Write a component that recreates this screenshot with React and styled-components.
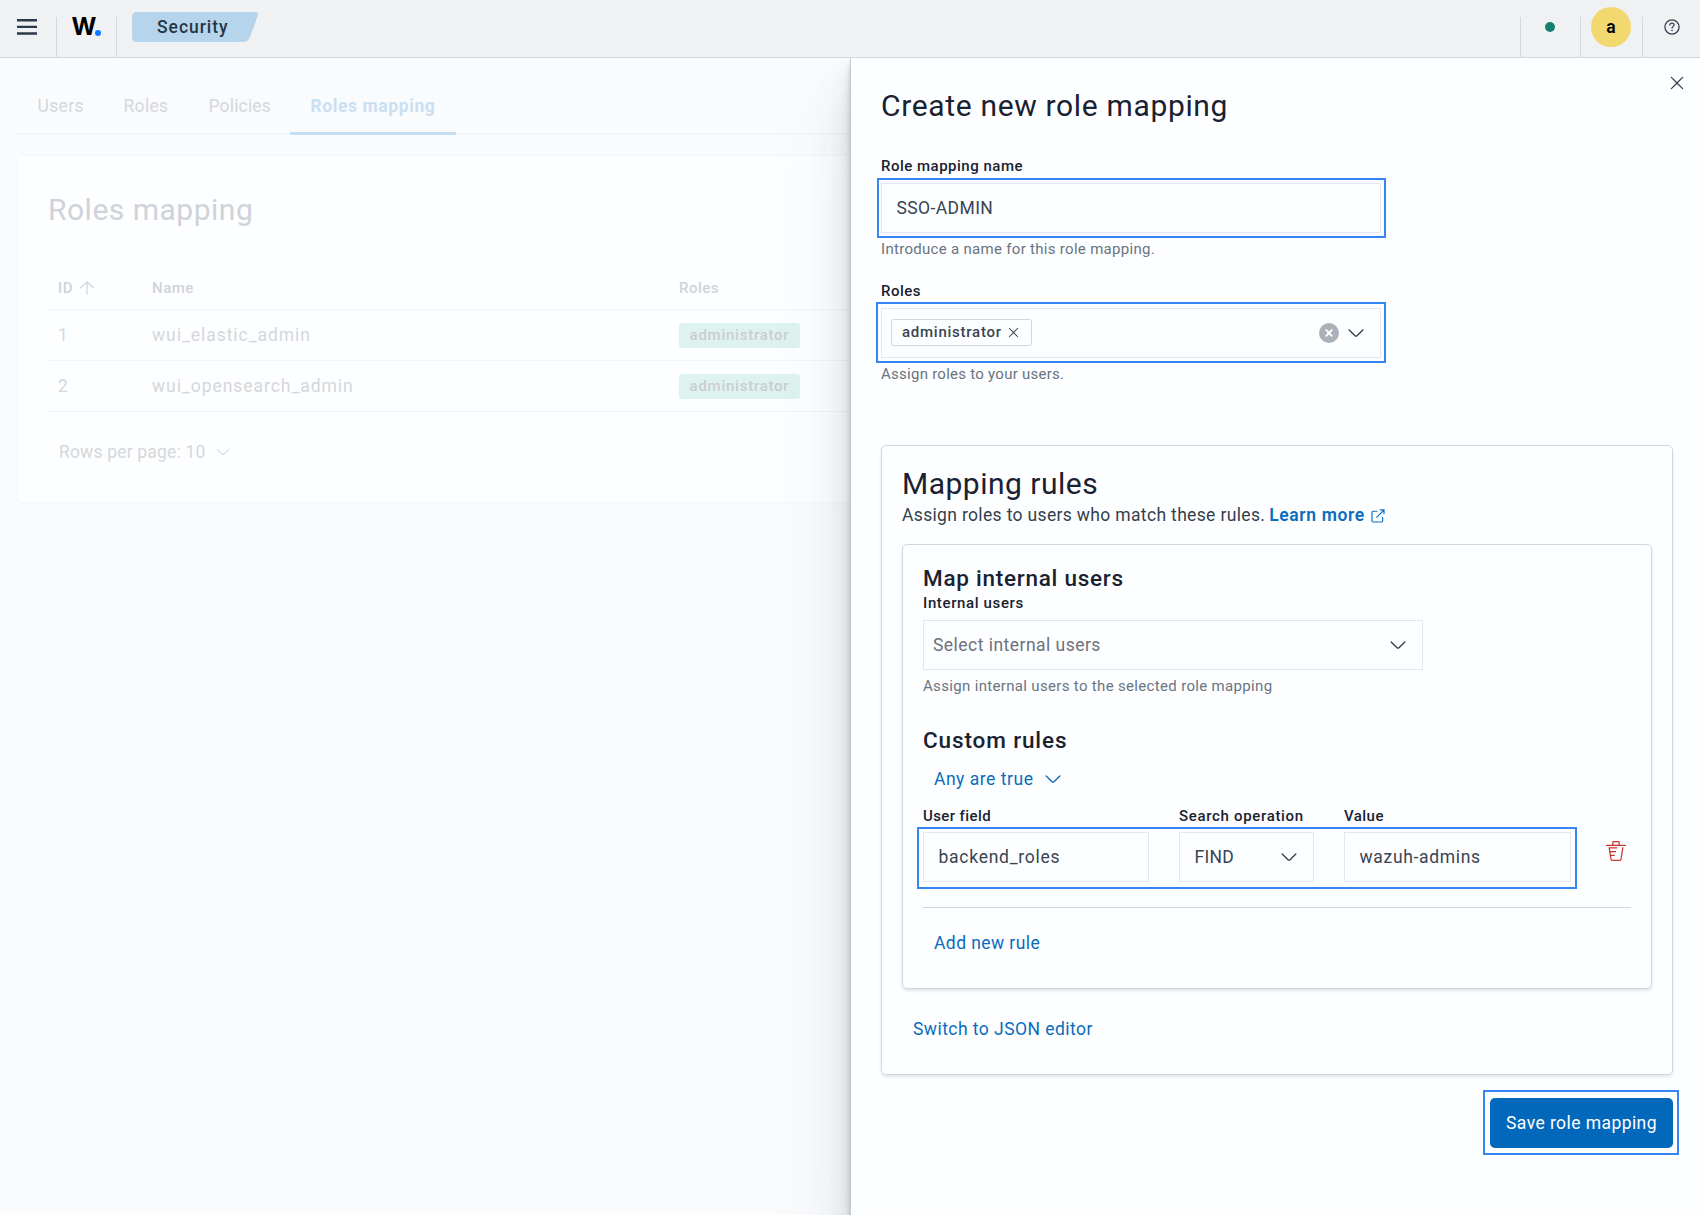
import React from "react";
import styled, { createGlobalStyle } from "styled-components";

const GlobalStyle = createGlobalStyle`
  * { box-sizing: border-box; }
  body {
    margin: 0;
    background: #fafbfd;
    font-family: Roboto, "Liberation Sans", sans-serif;
    font-size: 17.5px;
    color: #343f4d;
  }
  h1, h2, h3, p { margin: 0; font-weight: 400; }
  button { font: inherit; color: inherit; border: 0; background: none; padding: 0; }
`;

const Page = styled.div`
  width: 1700px;
  height: 1215px;
  display: flex;
  flex-direction: column;
  overflow: hidden;
`;

/* ---------- text ---------- */
const Text = styled.span`
  letter-spacing: ${(p) => p.$track || 0}px;
  white-space: pre;
`;

/* ---------- header ---------- */
const Header = styled.header`
  position: relative;
  z-index: 2;
  flex: none;
  display: flex;
  justify-content: space-between;
  height: 58px;
  background: #f0f1f3;
  border-bottom: 1px solid #d4d7dc;
`;
const HeaderSide = styled.div`
  display: flex;
  align-items: flex-end;
`;
const HeaderCell = styled.div`
  width: ${(p) => p.$w}px;
  height: 40px;
  padding-bottom: 20px;
  padding-right: ${(p) => p.$pr || 0}px;
  display: flex;
  align-items: center;
  justify-content: center;
  border-left: ${(p) => (p.$line ? "1px solid #d4d7dc" : "0")};
`;
const MenuCell = styled(HeaderCell)`
  justify-content: flex-start;
  padding-left: 17px;
`;
const Logo = styled.div`
  display: flex;
  align-items: center;
  font-family: Inter, sans-serif;
  font-size: 24px;
  font-weight: 650;
  line-height: 20px;
  color: #000;
`;
const LogoMark = styled.span`
  display: inline-block;
  margin-right: -1px;
`;
const LogoDot = styled.i`
  width: 6px;
  height: 6px;
  margin-top: 12px;
  border-radius: 50%;
  background: #0a7dff;
`;
const Crumb = styled.div`
  position: relative;
  align-self: flex-start;
  display: flex;
  width: 126px;
  height: 30px;
  margin: 12px 0 0 15px;
  padding-left: 25px;
  align-items: center;
  font-weight: 500;
  color: #263645;
  svg { position: absolute; left: 0; top: 0; }
  span { position: relative; }
`;
const StatusDot = styled.i`
  width: 10px;
  height: 10px;
  border-radius: 50%;
  background: #147f6d;
`;
const Avatar = styled.div`
  flex: none;
  width: 40px;
  height: 40px;
  border-radius: 50%;
  background: #f1d86f;
  font-weight: 600;
  color: #000;
  line-height: 40px;
  text-align: center;
`;

/* ---------- main area ---------- */
const Main = styled.main`
  flex: 1;
  display: grid;
  grid-template-columns: 850px 850px;
`;
const Backdrop = styled.section`
  padding: 20px 0 0 17px;
  color: #d4d7db;
`;
const Tabs = styled.nav`
  display: flex;
  height: 57px;
  box-shadow: inset 0 -2px 0 #f5f6f8;
`;
const Tab = styled.div`
  width: ${(p) => p.$w}px;
  padding-left: ${(p) => p.$pad || 20.5}px;
  line-height: 57px;
  color: ${(p) => (p.$active ? "#c9e0f3" : "inherit")};
  font-weight: ${(p) => (p.$active ? 700 : 400)};
  box-shadow: ${(p) => (p.$active ? "inset 0 -3px 0 #c5def1" : "none")};
`;
const TablePanel = styled.div`
  height: 348px;
  margin-top: 20px;
  padding: 36px 0 0 30px;
  background: #fdfeff;
  border: 1px solid #f5f6f8;
  border-right: 0;
  border-radius: 5px 0 0 5px;
  box-shadow: 0 2px 2px rgba(60, 70, 100, 0.012);
`;
const PanelTitle = styled.h1`
  font-size: 30px;
  line-height: 36px;
  color: #cfd2d8;
`;
const Table = styled.div`
  margin-top: 39px;
`;
const TableRow = styled.div`
  display: grid;
  grid-template-columns: 94px 527px 1fr;
  align-items: center;
  height: ${(p) => (p.$head ? 43 : 51)}px;
  padding-left: 10px;
  border-bottom: 1px solid #f4f5f8;
  font-size: ${(p) => (p.$head ? "15px" : "17.5px")};
  font-weight: ${(p) => (p.$head ? 500 : 400)};
  color: ${(p) => (p.$head ? "#cfd2d8" : "#d4d7db")};
`;
const Sorted = styled.div`
  display: flex;
  align-items: center;
  gap: 7px;
`;
const Badge = styled.span`
  width: 121px;
  height: 25px;
  line-height: 25px;
  text-align: center;
  background: #dff3ee;
  border-radius: 3px;
  font-size: 15px;
  font-weight: 500;
  color: #c9ced0;
`;
const Pager = styled.div`
  display: flex;
  align-items: center;
  gap: 10px;
  height: 24px;
  margin: 28px 0 0 11px;
`;

/* ---------- flyout ---------- */
const Flyout = styled.aside`
  position: relative;
  z-index: 1;
  display: flex;
  flex-direction: column;
  padding: 30px 27px 0 30px;
  background: #fdfeff;
  border-left: 1px solid #c6cad2;
  box-shadow:
    0 50px 80px rgba(65, 78, 101, 0.1),
    0 30px 40px rgba(65, 78, 101, 0.1),
    0 20px 20px rgba(65, 78, 101, 0.1),
    0 10px 10px rgba(65, 78, 101, 0.1),
    0 5px 5px rgba(65, 78, 101, 0.1),
    0 2.5px 2.5px rgba(65, 78, 101, 0.1);
`;
const CloseButton = styled.button`
  position: absolute;
  top: 15px;
  right: 13px;
  width: 20px;
  height: 20px;
`;
const Title = styled.h2`
  font-size: 30px;
  line-height: 36px;
  color: #1a2130;
`;
const SectionTitle = styled.h3`
  margin-top: ${(p) => p.$mt || 0}px;
  font-size: 22.5px;
  font-weight: 500;
  line-height: 27px;
  color: #1a2130;
`;
const Label = styled.div`
  margin: ${(p) => p.$mt || 0}px 0 ${(p) => p.$mb || 7}px;
  font-size: 15px;
  font-weight: 500;
  line-height: 20px;
  color: #1a2130;
`;
const Help = styled.p`
  margin-top: 6px;
  font-size: 15px;
  line-height: 20px;
  color: #69747f;
`;
const Field = styled.div`
  position: relative;
  display: flex;
  align-items: center;
  width: ${(p) => p.$w}px;
  height: 50px;
  padding: 0 ${(p) => p.$right || 15}px 0 ${(p) => p.$left || 14.5}px;
  background: #fdfeff;
  border: 1px solid #e3e7f2;
  color: ${(p) => (p.$placeholder ? "#6d717b" : "#374452")};
`;
const Spacer = styled.span`
  flex: 1;
`;
const Highlight = styled.div`
  position: absolute;
  top: ${(p) => p.$t}px;
  right: ${(p) => p.$r}px;
  bottom: ${(p) => p.$b}px;
  left: ${(p) => p.$l}px;
  border: 2px solid #3585f5;
  pointer-events: none;
`;
const Pill = styled.span`
  display: flex;
  align-items: center;
  gap: 4px;
  width: 141px;
  height: 27px;
  margin-top: -2px;
  padding-left: 10px;
  border: 1px solid #d3d6dc;
  border-radius: 2.5px;
  font-size: 15px;
  font-weight: 500;
`;
const ClearButton = styled.button`
  display: flex;
  align-items: center;
  justify-content: center;
  width: 20px;
  height: 20px;
  margin-right: 7px;
  border-radius: 50%;
  background: #abb1b8;
`;
const Panel = styled.div`
  display: flex;
  flex-direction: column;
  align-items: flex-start;
  margin-top: ${(p) => p.$mt}px;
  padding: 20px 20px 33px;
  border: 1px solid #d3d6dc;
  border-radius: 5px;
  box-shadow: 0 2px 3px rgba(65, 78, 101, 0.14);
`;
const InnerPanel = styled(Panel)`
  width: 750px;
`;
const Intro = styled.p`
  display: flex;
  align-items: center;
  margin-top: 1px;
  line-height: 24px;
`;
const Link = styled.a`
  display: flex;
  align-items: center;
  gap: 6px;
  margin-left: 4px;
  font-weight: 600;
  color: #0a6cbd;
  svg { margin-top: 2px; }
`;
const TextButton = styled.button`
  display: flex;
  align-items: center;
  gap: 10px;
  height: 25px;
  margin: ${(p) => p.$mt}px 0 0 11px;
  color: #0a6cbd;
`;
const RuleRow = styled.div`
  position: relative;
  display: grid;
  grid-template-columns: 226px 135px 227px 20px;
  column-gap: 30px;
  width: 708px;
  margin-top: 15px;
  padding-bottom: 25px;
  border-bottom: 1px solid #d3d6dc;
`;
const DeleteButton = styled.button`
  display: flex;
  width: 20px;
  height: 20px;
  margin: 35px 0 0 5px;
`;
const SaveButton = styled.button`
  position: relative;
  align-self: flex-end;
  width: 183px;
  height: 50px;
  margin-top: 23px;
  border-radius: 5px;
  background: #0268bc;
  color: #fff;
`;

/* ---------- icons ---------- */
const Svg = styled.svg`
  display: block;
  flex: none;
`;
const Icon = ({ d, size = 20, color = "#343f4d" }) => (
  <Svg width={size} height={size} viewBox="0 0 16 16" fill={color}>
    <path d={d} />
  </Svg>
);
const CHEVRON =
  "M13.069 5.157 8.384 9.768a.546.546 0 0 1-.768 0L2.93 5.158a.552.552 0 0 0-.771 0 .53.53 0 0 0 0 .759l4.684 4.61a1.65 1.65 0 0 0 2.312 0l4.684-4.61a.53.53 0 0 0 0-.76.552.552 0 0 0-.771 0Z";
const CROSS =
  "M7.293 8 3.146 3.854a.5.5 0 1 1 .708-.708L8 7.293l4.146-4.147a.5.5 0 0 1 .708.708L8.707 8l4.147 4.146a.5.5 0 0 1-.708.708L8 8.707l-4.146 4.147a.5.5 0 0 1-.708-.708L7.293 8Z";
const TRASH =
  "M11 3h5v1H0V3h5V1a1 1 0 0 1 1-1h4a1 1 0 0 1 1 1v2Zm-7.056 8H7v1H4.1l.392 2.519c.042.269.254.458.493.458h6.03c.239 0 .451-.189.493-.458l1.498-9.576H14l-1.504 9.73c-.116.747-.74 1.304-1.481 1.304h-6.03c-.741 0-1.365-.557-1.481-1.304l-1.511-9.73H9V5.95H3.157L3.476 8H8v1H3.632l.312 2ZM6 3h4V1H6v2Z";

const MenuIcon = () => (
  <Svg width="20" height="16" viewBox="0 0 20 16" fill="#2b3a4a">
    <path d="M0 0h20v2.4H0zM0 6.7h20v2.4H0zM0 13.3h20v2.4H0z" />
  </Svg>
);
const CrumbShape = () => (
  <svg width="126" height="30" viewBox="0 0 126 30" fill="#b6d4ec">
    <path d="M5 0H123Q127 0 125.6 4L118.2 24.5Q116.2 30 111 30H5Q0 30 0 25V5Q0 0 5 0Z" />
  </svg>
);
const SortUp = () => (
  <Svg width="14" height="14" viewBox="0 0 14 14" fill="none" stroke="#cfd2d8" strokeWidth="1.2" strokeLinecap="round">
    <path d="M7 13.2V1M0.8 6.8 7 0.9l6.2 5.9" />
  </Svg>
);
const HelpIcon = () => (
  <Svg width="16" height="16" viewBox="0 0 16 16" fill="none" stroke="#343f4d" strokeWidth="1.25" strokeLinecap="round">
    <circle cx="8" cy="8" r="7.1" />
    <path d="M5.9 6.1C5.9 4.7 6.8 4 8 4s2.1.8 2.1 1.9C10.1 7.3 8 7.5 8 9.2" />
    <circle cx="8" cy="11.5" r=".4" fill="#343f4d" strokeWidth=".8" />
  </Svg>
);
const PopOut = () => (
  <Svg width="14" height="14" viewBox="0 0 14 14" fill="none" stroke="#0a6cbd" strokeWidth="1.15" strokeLinecap="round">
    <path d="M6 2.2H2.2Q1 2.2 1 3.4V11.8Q1 13 2.2 13H10.4Q11.6 13 11.6 11.8V8.2M5.7 8.4 12.8 1.1M9.2.9H13V4.7" />
  </Svg>
);
const ClearCross = () => (
  <Svg width="8" height="8" viewBox="0 0 8 8" stroke="#fff" strokeWidth="1.9" strokeLinecap="round">
    <path d="M1.2 1.2l5.6 5.6M6.8 1.2 1.2 6.8" />
  </Svg>
);

const rows = [
  { id: "1", name: "wui_elastic_admin" },
  { id: "2", name: "wui_opensearch_admin" },
];

export default function App() {
  return (
    <Page>
      <GlobalStyle />
      <Header>
        <HeaderSide>
          <MenuCell $w={56}><MenuIcon /></MenuCell>
          <HeaderCell $w={60} $line>
            <Logo><LogoMark>W</LogoMark><LogoDot /></Logo>
          </HeaderCell>
          <HeaderCell $w={1} $line />
          <Crumb><CrumbShape /><Text $track={0.97}>Security</Text></Crumb>
        </HeaderSide>
        <HeaderSide>
          <HeaderCell $w={60} $pr={1} $line><StatusDot /></HeaderCell>
          <HeaderCell $w={62} $pr={1} $line><Avatar>a</Avatar></HeaderCell>
          <HeaderCell $w={58} $line><HelpIcon /></HeaderCell>
        </HeaderSide>
      </Header>

      <Main>
        <Backdrop>
          <Tabs>
            <Tab $w={86}><Text $track={0.35}>Users</Text></Tab>
            <Tab $w={85}><Text $track={0.33}>Roles</Text></Tab>
            <Tab $w={102}><Text $track={0.17}>Policies</Text></Tab>
            <Tab $w={166} $active><Text $track={0.6}>Roles mapping</Text></Tab>
          </Tabs>
          <TablePanel>
            <PanelTitle><Text $track={0.5}>Roles mapping</Text></PanelTitle>
            <Table>
              <TableRow $head>
                <Sorted><Text $track={0.4}>ID</Text><SortUp /></Sorted>
                <Text $track={0.5}>Name</Text>
                <Text $track={0.5}>Roles</Text>
              </TableRow>
              {rows.map((row) => (
                <TableRow key={row.id}>
                  <Text>{row.id}</Text>
                  <Text $track={0.95}>{row.name}</Text>
                  <Badge><Text $track={0.75}>administrator</Text></Badge>
                </TableRow>
              ))}
            </Table>
            <Pager>
              <Text $track={0.18}>Rows per page: 10</Text>
              <Icon d={CHEVRON} size={16} color="#d4d7db" />
            </Pager>
          </TablePanel>
        </Backdrop>

        <Flyout>
          <CloseButton aria-label="Close"><Icon d={CROSS} /></CloseButton>
          <Title><Text $track={0.66}>Create new role mapping</Text></Title>

          <Label $mt={32}><Text $track={0.5}>Role mapping name</Text></Label>
          <Field $w={500}>
            <Text $track={0.4}>SSO-ADMIN</Text>
            <Highlight $t={-6} $r={-6} $b={-6} $l={-5} />
          </Field>
          <Help><Text $track={0.3}>Introduce a name for this role mapping.</Text></Help>

          <Label $mt={22}><Text $track={0.49}>Roles</Text></Label>
          <Field $w={500} $left={9} $right={14}>
            <Pill><Text $track={0.75}>administrator</Text><Icon d={CROSS} size={15} /></Pill>
            <Spacer />
            <ClearButton aria-label="Clear"><ClearCross /></ClearButton>
            <Icon d={CHEVRON} />
            <Highlight $t={-7} $r={-6} $b={-6} $l={-6} />
          </Field>
          <Help><Text $track={0.26}>Assign roles to your users.</Text></Help>

          <Panel $mt={61}>
            <Title><Text $track={0.5}>Mapping rules</Text></Title>
            <Intro>
              <Text $track={0.34}>Assign roles to users who match these rules.</Text>
              <Link><Text $track={0.62}>Learn more</Text><PopOut /></Link>
            </Intro>
            <InnerPanel $mt={17}>
              <SectionTitle><Text $track={0.74}>Map internal users</Text></SectionTitle>
              <Label $mt={1}><Text $track={0.63}>Internal users</Text></Label>
              <Field $w={500} $left={9} $right={14} $placeholder>
                <Text $track={0.47}>Select internal users</Text>
                <Spacer />
                <Icon d={CHEVRON} />
              </Field>
              <Help><Text $track={0.33}>Assign internal users to the selected role mapping</Text></Help>

              <SectionTitle $mt={31}><Text $track={0.88}>Custom rules</Text></SectionTitle>
              <TextButton $mt={12}><Text $track={0.52}>Any are true</Text><Icon d={CHEVRON} color="#0a6cbd" /></TextButton>

              <RuleRow>
                <div>
                  <Label $mb={6}><Text $track={0.4}>User field</Text></Label>
                  <Field $w={226}><Text $track={0.74}>backend_roles</Text></Field>
                </div>
                <div>
                  <Label $mb={6}><Text $track={0.67}>Search operation</Text></Label>
                  <Field $w={135} $right={14}><Text $track={0.3}>FIND</Text><Spacer /><Icon d={CHEVRON} /></Field>
                </div>
                <div>
                  <Label $mb={6}><Text $track={0.45}>Value</Text></Label>
                  <Field $w={227}><Text $track={0.68}>wazuh-admins</Text></Field>
                </div>
                <DeleteButton aria-label="Delete"><Icon d={TRASH} color="#c5362b" /></DeleteButton>
                <Highlight $t={21} $r={54} $b={18} $l={-6} />
              </RuleRow>
              <TextButton $mt={22}><Text $track={0.42}>Add new rule</Text></TextButton>
            </InnerPanel>
            <TextButton $mt={27}><Text $track={0.45}>Switch to JSON editor</Text></TextButton>
          </Panel>

          <SaveButton>
            <Text $track={0.43}>Save role mapping</Text>
            <Highlight $t={-8} $r={-6} $b={-7} $l={-7} />
          </SaveButton>
        </Flyout>
      </Main>
    </Page>
  );
}
